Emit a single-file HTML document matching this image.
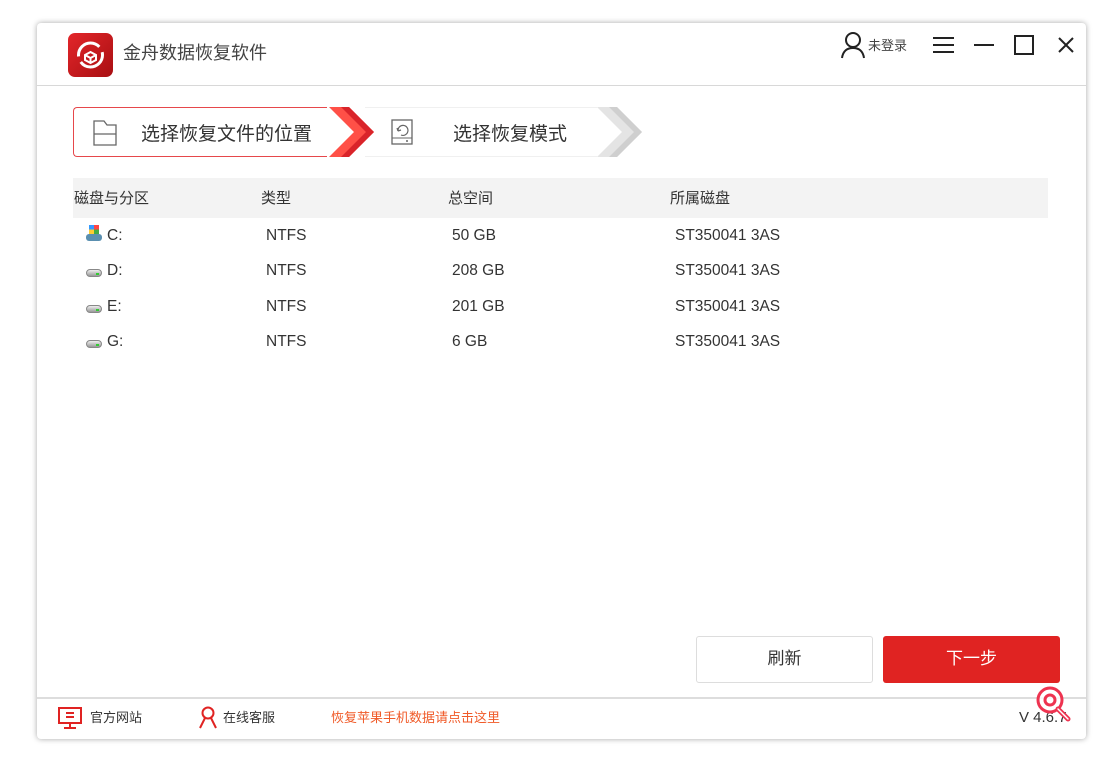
<!DOCTYPE html>
<html><head><meta charset="utf-8"><style>
*{margin:0;padding:0;box-sizing:border-box}
body{width:1120px;height:760px;background:#fff;position:relative;overflow:hidden;font-family:"Liberation Sans","Noto Sans CJK SC",sans-serif;color:#333}
.win{position:absolute;left:37px;top:23px;width:1049px;height:716px;background:#fff;border-radius:4px;box-shadow:0 0 6px rgba(0,0,0,.35)}
.a{position:absolute}
.hr{position:absolute;left:0;width:1049px;height:1px;background:#d8d8d8}
.th{font-size:15px;color:#333}
.row{font-size:15.5px;color:#333}
.drv{position:absolute;width:16px;height:8px;border-radius:4px;background:linear-gradient(#eee,#999);border:1px solid #888}
.drv:after{content:"";position:absolute;right:2px;top:3px;width:3px;height:2px;background:#3c3}
</style></head><body>
<div class="win">
 <div class="a" style="left:31px;top:10px;width:45px;height:44px;border-radius:7px;background:linear-gradient(135deg,#e3262a,#a80f12)">
  <svg width="45" height="44" viewBox="0 0 45 44"><circle cx="22.5" cy="22" r="12" fill="none" stroke="#fff" stroke-width="3" stroke-dasharray="30 6"/><path d="M17 22l5.5-3 5.5 3v5l-5.5 3-5.5-3z M17 22l5.5 3 5.5-3 M22.5 25v5" fill="none" stroke="#fff" stroke-width="2"/></svg>
 </div>
 <div class="a" style="left:86px;top:16px;font-size:18px;color:#444">金舟数据恢复软件</div>
 <svg class="a" style="left:803px;top:8px" width="26" height="28" viewBox="0 0 26 28"><circle cx="13" cy="9" r="7" fill="none" stroke="#222" stroke-width="2"/><path d="M2 27c1-7 5-10 11-10s10 3 11 10" fill="none" stroke="#222" stroke-width="2"/></svg>
 <div class="a" style="left:831px;top:12px;font-size:13px;color:#444">未登录</div>
 <div class="a" style="left:896px;top:14px;width:21px;height:2px;background:#222;box-shadow:0 7px 0 #222,0 14px 0 #222"></div>
 <div class="a" style="left:937px;top:21px;width:20px;height:2px;background:#222"></div>
 <div class="a" style="left:977px;top:12px;width:20px;height:20px;border:2px solid #222"></div>
 <svg class="a" style="left:1020px;top:13px" width="18" height="18"><path d="M2 2L16 16M16 2L2 16" stroke="#222" stroke-width="2"/></svg>
 <div class="hr" style="top:62px"></div>
 <div class="a" style="left:36px;top:84px;width:270px;height:50px;border:1px solid #e6474b;border-right:none;border-radius:4px 0 0 4px;background:#fff"></div>
 <svg class="a" style="left:290px;top:84px" width="320" height="50" viewBox="0 0 320 50">
  <polygon points="0,0 15,0 40,25 15,50 0,50" fill="#fff"/>
  <polygon points="2,0 22,0 47,25 22,50 2,50 27,25" fill="#ff5047"/>
  <polygon points="14,0 22,0 47,25 22,50 14,50 39,25" fill="#d9242a"/>
  <path d="M38 0H270" stroke="#e2e2e2"/><path d="M38 50H270" stroke="#e2e2e2"/>
  <polygon points="270,0 290,0 315,25 290,50 270,50 295,25" fill="#e4e4e4"/>
  <polygon points="282,0 290,0 315,25 290,50 282,50 307,25" fill="#cfcfcf"/>
 </svg>
 <svg class="a" style="left:56px;top:97px" width="24" height="26"><path d="M1 1H11L14 5H23V25H1Z M1 14H23" fill="none" stroke="#666" stroke-width="1.3"/></svg>
 <div class="a" style="left:104px;top:96px;font-size:19px;color:#333">选择恢复文件的位置</div>
 <svg class="a" style="left:354px;top:96px" width="22" height="26"><rect x="1" y="1" width="20" height="24" fill="none" stroke="#666" stroke-width="1.3"/><path d="M7 12a5 5 0 1 1 3 4M7 12l-1-3M7 12l3-1" fill="none" stroke="#666" stroke-width="1.2"/><path d="M1 19H21" stroke="#666"/><circle cx="16" cy="22" r="1" fill="#666"/></svg>
 <div class="a" style="left:416px;top:96px;font-size:19px;color:#333">选择恢复模式</div>
 <div class="a" style="left:36px;top:155px;width:975px;height:40px;background:#f3f3f3"></div>
 <div class="a th" style="left:37px;top:164px">磁盘与分区</div>
 <div class="a th" style="left:224px;top:164px">类型</div>
 <div class="a th" style="left:411px;top:164px">总空间</div>
 <div class="a th" style="left:633px;top:164px">所属磁盘</div>

 <div class="a" style="left:49px;top:202px;width:16px;height:17px">
  <div style="position:absolute;left:3px;top:0;width:10px;height:9px;background:conic-gradient(#f44 0 25%,#4a4 0 50%,#fc3 0 75%,#39f 0)"></div>
  <div style="position:absolute;left:0;top:9px;width:16px;height:7px;border-radius:3px;background:#5a8fb0"></div>
 </div>
 <div class="a row" style="left:70px;top:204px">C:</div>
 <div class="a row" style="left:229px;top:204px">NTFS</div>
 <div class="a row" style="left:415px;top:204px">50 GB</div>
 <div class="a row" style="left:638px;top:204px">ST350041 3AS</div>

 <div class="drv" style="left:49px;top:246px"></div>
 <div class="a row" style="left:70px;top:239px">D:</div>
 <div class="a row" style="left:229px;top:239px">NTFS</div>
 <div class="a row" style="left:415px;top:239px">208 GB</div>
 <div class="a row" style="left:638px;top:239px">ST350041 3AS</div>

 <div class="drv" style="left:49px;top:282px"></div>
 <div class="a row" style="left:70px;top:275px">E:</div>
 <div class="a row" style="left:229px;top:275px">NTFS</div>
 <div class="a row" style="left:415px;top:275px">201 GB</div>
 <div class="a row" style="left:638px;top:275px">ST350041 3AS</div>

 <div class="drv" style="left:49px;top:317px"></div>
 <div class="a row" style="left:70px;top:310px">G:</div>
 <div class="a row" style="left:229px;top:310px">NTFS</div>
 <div class="a row" style="left:415px;top:310px">6 GB</div>
 <div class="a row" style="left:638px;top:310px">ST350041 3AS</div>

 <div class="a" style="left:659px;top:613px;width:177px;height:47px;border:1px solid #ddd;border-radius:3px;text-align:center;line-height:43px;font-size:17px;color:#333">刷新</div>
 <div class="a" style="left:846px;top:613px;width:177px;height:47px;background:#e02322;border-radius:3px;text-align:center;line-height:45px;font-size:17px;color:#fff">下一步</div>

 <div class="hr" style="top:674px;background:#ddd;height:2px"></div>
 <svg class="a" style="left:20px;top:684px" width="26" height="22"><rect x="2" y="1" width="22" height="15" fill="none" stroke="#e02322" stroke-width="2"/><path d="M9 6h8M9 10h8M13 16v4M7 21h12" stroke="#e02322" stroke-width="2"/></svg>
 <div class="a" style="left:53px;top:684px;font-size:13px;color:#333">官方网站</div>
 <svg class="a" style="left:160px;top:683px" width="22" height="24"><circle cx="11" cy="7" r="5.5" fill="none" stroke="#e02322" stroke-width="2"/><path d="M8 12L3 22M14 12l5 10" stroke="#e02322" stroke-width="2"/></svg>
 <div class="a" style="left:186px;top:684px;font-size:13px;color:#333">在线客服</div>
 <div class="a" style="left:294px;top:684px;font-size:13px;color:#f05a28">恢复苹果手机数据请点击这里</div>
 <div class="a" style="left:982px;top:686px;font-size:15px;color:#333">V 4.6.7</div>
 <svg class="a" style="left:997px;top:659px" width="42" height="44"><circle cx="16" cy="18" r="12" fill="rgba(255,255,255,.8)" stroke="#ee3350" stroke-width="3"/><circle cx="16" cy="18" r="5" fill="none" stroke="#ee3350" stroke-width="3"/><path d="M24 27l10 10" stroke="#ee3350" stroke-width="5" stroke-linecap="round"/><path d="M24 27l10 10" stroke="#fff" stroke-width="1.5" stroke-linecap="round"/></svg>
</div>
</body></html>
